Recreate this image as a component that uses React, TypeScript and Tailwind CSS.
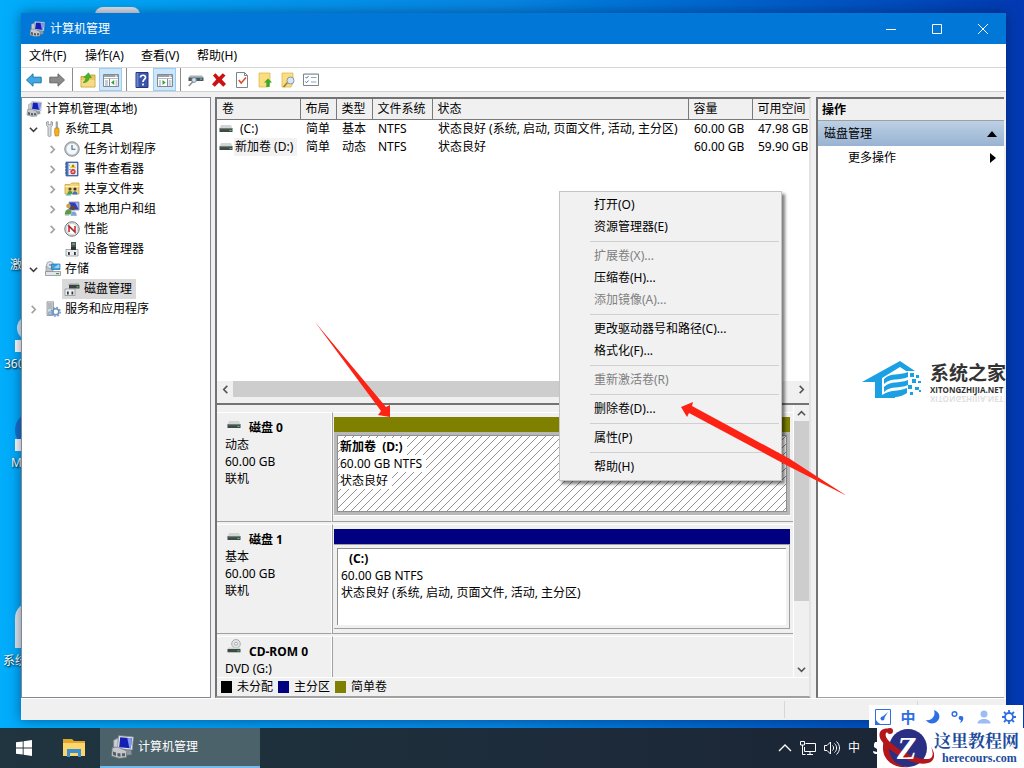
import { useState, ReactNode } from "react";

type IconProps = { className?: string };

const ComputerIcon = ({ className = "h-4 w-4" }: IconProps) => (
  <svg viewBox="0 0 16 16" className={className} aria-hidden="true">
    <path d="M2.500 3.500 5.500 2v9h-3z" fill="#c9ced3" stroke="#8d949b" strokeWidth=".5" />
    <path d="M5.800.5 15.600 1.300 14.800 10 5 9z" fill="#e4e7ea" stroke="#8e959b" strokeWidth=".5" />
    <path d="M6.800 1.500 14.600 2.100 13.900 8.900 6.100 8.100z" fill="#1420b4" />
    <path d="m11.500 1.900 3.100.2-.7 6.800-1-.1z" fill="#7f98ee" />
    <path d="M1.500 8.500 5 8l6 2.500v4.500l-5 .5-5-1.500z" fill="#c3c8cc" stroke="#6f767d" strokeWidth=".5" />
    <path d="m2 11 2 .6v2.400l-2-.6zM5 12l2 .3v2.200l-2-.3zM8 12.200h2v2H8z" fill="#565d64" />
    <path d="m10.500 10 3.500.3.500 2.700-3 .5z" fill="#8d949b" />
  </svg>
);

const ToolsIcon = () => (
  <svg viewBox="0 0 16 16" className="h-4 w-4" aria-hidden="true">
    <path d="M1.500 1v3.500L3 6v8.500c0 1.300 3 1.300 3 0V6l1.500-1.500V1L6 0.500v3.200H3.300V.5z" fill="#d8dcdf" stroke="#7d858c" strokeWidth=".7" />
    <path d="M11 .8h1.600V7H11z" fill="#a8aeb3" stroke="#777" strokeWidth=".4" />
    <path d="M10 7h3.600l.6 3-.7 5h-3.400l-.7-5z" fill="#f2b01e" stroke="#b57a0c" strokeWidth=".6" />
  </svg>
);

const ClockIcon = () => (
  <svg viewBox="0 0 16 16" className="h-4 w-4" aria-hidden="true">
    <circle cx="8" cy="8" r="7.300" fill="#b9bfc5" stroke="#7f868d" strokeWidth=".8" />
    <circle cx="8" cy="8" r="5.600" fill="#f4f8fb" />
    <path d="M8 4v4.300h3.400" fill="none" stroke="#3d5f8a" strokeWidth="1.100" />
  </svg>
);

const EventIcon = () => (
  <svg viewBox="0 0 16 16" className="h-4 w-4" aria-hidden="true">
    <path d="M2 1h12v14H2z" fill="#4f76b8" stroke="#35548c" strokeWidth=".7" />
    <path d="M4.500 2h8.500v12H4.500z" fill="#e9eef6" />
    <path d="M1 3h2M1 6h2M1 9h2M1 12h2" stroke="#35548c" />
    <path d="M9 2.500 12 7H6z" fill="#f5c518" />
    <path d="M9 4v2" stroke="#333" strokeWidth=".9" />
    <circle cx="9" cy="10.700" r="2.600" fill="#d3382c" />
    <path d="m8 9.700 2 2m0-2-2 2" stroke="#fff" strokeWidth=".8" />
    <path d="M5 8.500h2M5 4.500h1" stroke="#7a8ba6" strokeWidth=".7" />
  </svg>
);

const SharedFolderIcon = () => (
  <svg viewBox="0 0 16 16" className="h-4 w-4" aria-hidden="true">
    <path d="M1 3.500h5L7.500 2H15v11H1z" fill="#f3d576" stroke="#c59b2e" strokeWidth=".7" />
    <path d="M1 5.500h14" stroke="#fff2b8" />
    <circle cx="6" cy="8" r="1.600" fill="#5b4630" />
    <path d="M3.500 13c0-4.500 5-4.500 5 0z" fill="#4a9a4a" />
    <circle cx="11" cy="8" r="1.600" fill="#3a3430" />
    <path d="M8.500 13.500c0-4.500 5-4.500 5 0z" fill="#3f73bd" />
    <path d="M1.500 14.500c2-2.500 4-2.500 6 0z" fill="#41b1a4" />
  </svg>
);

const UsersIcon = () => (
  <svg viewBox="0 0 16 16" className="h-4 w-4" aria-hidden="true">
    <path d="M5 1h10v8H5z" fill="#2b3fc0" stroke="#9aa1a8" />
    <path d="M11 1.600h3.500v6.500z" fill="#9db1f4" />
    <circle cx="4.500" cy="5" r="2.300" fill="#d1a24d" />
    <circle cx="9" cy="7" r="2.200" fill="#6b4630" />
    <path d="M.7 13.500C.8 6.500 8.300 6.500 8.300 13.500z" fill="#5c9c49" />
    <path d="M6.500 15C6.500 8.500 13 8.500 13 15z" fill="#7da3dd" stroke="#fff" strokeWidth=".4" />
    <path d="M1 14h4" stroke="#9aa1a8" />
  </svg>
);

const PerformanceIcon = () => (
  <svg viewBox="0 0 16 16" className="h-4 w-4" aria-hidden="true">
    <circle cx="8" cy="8" r="7.200" fill="#e6e8ea" stroke="#6f757b" />
    <circle cx="8" cy="8" r="5.500" fill="#fff" stroke="#b9bdc2" strokeWidth=".6" />
    <path d="M5 11V5l6 6V5" fill="none" stroke="#cb1f24" strokeWidth="1.500" />
    <path d="m4 4.500 7 7" stroke="#444" strokeWidth=".7" />
  </svg>
);

const DeviceIcon = () => (
  <svg viewBox="0 0 16 16" className="h-4 w-4" aria-hidden="true">
    <path d="M7 1h5v8H7z" fill="#4d5358" />
    <path d="M8.300 2.300h2.400v1.500H8.300z" fill="#63cf5c" />
    <path d="M2 8.500h12v6.500H2z" fill="#eceeef" stroke="#82888d" strokeWidth=".7" />
    <path d="M4 11h1.800v3H4zM10 11h1.800v3H10z" fill="#33383c" />
    <path d="M7 6h5v3H7z" fill="#2f3438" />
  </svg>
);

const StorageIcon = () => (
  <svg viewBox="0 0 16 16" className="h-4 w-4" aria-hidden="true">
    <path d="M1 5h7v8H1z" fill="#bfc5ca" stroke="#7c838a" strokeWidth=".6" />
    <circle cx="5" cy="4" r="3.500" fill="#dfe4e8" stroke="#8a9199" strokeWidth=".7" />
    <circle cx="5" cy="4" r="1" fill="#8a9199" />
    <path d="M6.500 3H15v5.500H6.500z" fill="#3aa2e3" stroke="#2a6da1" strokeWidth=".7" />
    <path d="m9 7 4-3.500h1.500V7z" fill="#98d3f7" />
    <path d="M.5 10.500h15v4H.5z" fill="#e2e5e8" stroke="#7c838a" strokeWidth=".7" />
    <path d="M11 12h3v1.200h-3z" fill="#37a33d" />
  </svg>
);

const DiskManagementIcon = () => (
  <svg viewBox="0 0 16 16" className="h-4 w-4" aria-hidden="true">
    <path d="M5 4h10.500v3.500H5z" fill="#3b4044" />
    <path d="M4 3.500 6 2.500h8.500l1 1.500H5z" fill="#9ea4a9" />
    <path d="M12.500 5.200h2v1.200h-2z" fill="#4ed04b" />
    <path d="M1 8h10v6.500H1z" fill="#eceeef" stroke="#82888d" strokeWidth=".7" />
    <path d="M3 10.500h1.700v3H3zM7.500 10.500h1.700v3H7.500z" fill="#33383c" />
  </svg>
);

const ServicesIcon = () => (
  <svg viewBox="0 0 16 16" className="h-4 w-4" aria-hidden="true">
    <path d="M2 .8h6.500v13.700H2z" fill="#d3d8dc" stroke="#818990" strokeWidth=".7" />
    <path d="M3 3h4.500M3 5h4.500M3 7h4.500" stroke="#7f8890" strokeWidth=".8" />
    <circle cx="10.800" cy="10.800" r="3" fill="none" stroke="#6c93bd" strokeWidth="1.600" />
    <circle cx="10.800" cy="10.800" r="4.400" fill="none" stroke="#6c93bd" strokeWidth="1.400" strokeDasharray="1.700 1.750" />
    <circle cx="5" cy="12.500" r="1.700" fill="#a9c6e4" stroke="#6c93bd" strokeWidth=".7" />
  </svg>
);

const DriveIcon = () => (
  <svg viewBox="0 0 14 8" className="h-2 w-[14px] shrink-0" aria-hidden="true">
    <path d="M2 0h10l1.500 3.500H.5z" fill="#cfd6d4" />
    <path d="M.5 3.300h13V7H.5z" fill="#3f4a46" />
    <path d="M.5 3.300h13v.9H.5z" fill="#77817d" />
    <path d="M10.500 5h2v1h-2z" fill="#4bd46b" />
  </svg>
);

const CdIcon = () => (
  <svg viewBox="0 0 14 14" className="h-[14px] w-[14px]" aria-hidden="true">
    <circle cx="9" cy="4.800" r="4.300" fill="#e1e3e5" stroke="#989da1" strokeWidth=".8" />
    <circle cx="9" cy="4.800" r="1.500" fill="#f5f5f5" stroke="#989da1" strokeWidth=".8" />
    <path d="M1.500 8.500h11l1 1.800H.5z" fill="#cfd6d4" />
    <path d="M.5 10h13v3.300H.5z" fill="#3f4a46" />
    <path d="M10.500 11.300h2v1h-2z" fill="#4bd46b" />
  </svg>
);

const ArrowIcon = ({ fill, stroke, flip }: { fill: string; stroke: string; flip?: boolean }) => (
  <svg viewBox="0 0 16 16" className="h-4 w-4" aria-hidden="true">
    <path
      d={flip ? "M15.500 8 9 1.800v3.400H.8v5.600H9v3.400z" : "M.5 8 7 1.800v3.400h8.200v5.600H7v3.400z"}
      fill={fill}
      stroke={stroke}
    />
  </svg>
);

const FolderUpIcon = () => (
  <svg viewBox="0 0 16 16" className="h-4 w-4" aria-hidden="true">
    <path d="M1 4.500h8l1.500-1.500H15v12H1z" fill="#ecc95f" stroke="#c1952b" strokeWidth=".8" />
    <path d="M1.500 14.500V8h13v6.500z" fill="#f7dc85" />
    <path d="M3 10.500C4.500 9.500 6 7.500 6 5.200L3.800 5.500 8.500.8l3 5-2.300-.4C9 8.500 6.500 11 3 10.500z" fill="#45b52c" stroke="#2d8a1b" strokeWidth=".5" />
  </svg>
);

const PanelIcon = ({ flip }: { flip?: boolean }) => (
  <svg viewBox="0 0 16 16" className="h-4 w-4" aria-hidden="true">
    <path d="M.5 2.500h15v12H.5z" fill="#fff" stroke="#82898f" />
    <path d="M1 3h14v2H1z" fill="#9aa2a9" />
    <path d="M12 3.500h2v1h-2z" fill="#fff" />
    <path d="M1 6.500h14" stroke="#b3b9be" />
    {flip ? (
      <>
        <path d="M10.500 7v7.500" stroke="#82898f" />
        <path d="M11.500 9h3M11.500 11h3M11.500 13h3M2 9h2M2 11h2M2 13h2" stroke="#8fa0b3" />
        <path d="m5.500 8 3.200 2.500L5.500 13z" fill="#3d9b35" />
      </>
    ) : (
      <>
        <path d="M6.500 7v7.500" stroke="#82898f" />
        <path d="M2 9h3M2 11h3M2 13h3M12.500 9h2M12.500 11h2M12.500 13h2" stroke="#8fa0b3" />
        <path d="m11.200 8-3.200 2.500 3.200 2.500z" fill="#3d9b35" />
      </>
    )}
  </svg>
);

const HelpIcon = () => (
  <svg viewBox="0 0 16 16" className="h-4 w-4" aria-hidden="true">
    <path d="M2 .5h12v15H2z" fill="#3c55a8" stroke="#25397e" />
    <path d="M2.500 1h2v14h-2z" fill="#6d84cd" />
    <path d="M6.500 5.500c0-3 5-3 5 0 0 2-2.500 2-2.500 4.500M9 11.500v2" fill="none" stroke="#fff" strokeWidth="1.700" />
  </svg>
);

const RefreshDriveIcon = () => (
  <svg viewBox="0 0 16 16" className="h-4 w-4" aria-hidden="true">
    <path d="M2 3.500h12l1.500 2H.5z" fill="#a8b1b6" />
    <path d="M.5 5.500h15V9H.5z" fill="#4d575d" />
    <path d="M12 6.500h2v1.200h-2z" fill="#45c7d8" />
    <path d="M.8 14 5 9.500" stroke="#8d949a" strokeWidth="1.800" />
    <circle cx="6" cy="8" r="2.400" fill="#c5e3f4" stroke="#6c7880" strokeWidth=".8" />
  </svg>
);

const DeleteIcon = () => (
  <svg viewBox="0 0 16 16" className="h-4 w-4" aria-hidden="true">
    <path d="M2 3.500 4.500 1.200 8 5l3.800-3.800L14.500 3.500 10.800 7.600 15 12l-2.800 2.800L8 10.500l-4.200 4.300L1 12.200l4.300-4.600z" fill="#cb1111" />
  </svg>
);

const CheckPageIcon = () => (
  <svg viewBox="0 0 16 16" className="h-4 w-4" aria-hidden="true">
    <path d="M2.500.5h8l3 3v12h-11z" fill="#fff" stroke="#7d848a" />
    <path d="M10.500.5v3h3" fill="none" stroke="#7d848a" />
    <path d="m4.800 8 2.400 3 4.800-5.500" fill="none" stroke="#dc4a2b" strokeWidth="1.500" />
  </svg>
);

const PageUpIcon = () => (
  <svg viewBox="0 0 16 16" className="h-4 w-4" aria-hidden="true">
    <path d="M2 1h11v10l-2 4H2z" fill="#fade7f" stroke="#dcb341" strokeWidth=".7" />
    <path d="m11 6.500 4 4h-2.300V15H9.300v-4.500H7z" fill="#3da72a" />
  </svg>
);

const PageSearchIcon = () => (
  <svg viewBox="0 0 16 16" className="h-4 w-4" aria-hidden="true">
    <path d="M2 1h11v10l-2 4H2z" fill="#fade7f" stroke="#dcb341" strokeWidth=".7" />
    <path d="m3.500 15 4-4.500" stroke="#9a7c40" strokeWidth="1.600" />
    <circle cx="10.500" cy="8.500" r="3.500" fill="#d4e8f5" stroke="#8798a6" />
  </svg>
);

const ChecklistIcon = () => (
  <svg viewBox="0 0 16 16" className="h-4 w-4" aria-hidden="true">
    <path d="M.5 2h15v11.500H.5z" fill="#fff" stroke="#7d848a" />
    <path d="m2.500 5 1 1.200L5.500 4M2.500 9.500l1 1.200 2-2.200" fill="none" stroke="#3b6fc0" />
    <path d="M8 5.500h5.500M8 10h5.500" stroke="#93a5b8" />
    <path d="M1 2.500h14" stroke="#a6adb3" />
  </svg>
);

const Chevron = ({ d, color = "#555" }: { d: string; color?: string }) => (
  <svg viewBox="0 0 10 10" className="h-[9px] w-[9px]" aria-hidden="true">
    <path d={d} fill="none" stroke={color} strokeWidth="1.800" />
  </svg>
);

const DOWN = "M1 3l4 4 4-4";
const UP = "M1 7l4-4 4 4";
const LEFT = "M7 1 3 5l4 4";
const RIGHT = "M3 1l4 4-4 4";

type Node = { label: string; icon: ReactNode; open?: boolean; leaf?: boolean; children?: Node[] };

const tree: Node[] = [
  {
    label: "系统工具",
    icon: <ToolsIcon />,
    open: true,
    children: [
      { label: "任务计划程序", icon: <ClockIcon /> },
      { label: "事件查看器", icon: <EventIcon /> },
      { label: "共享文件夹", icon: <SharedFolderIcon /> },
      { label: "本地用户和组", icon: <UsersIcon /> },
      { label: "性能", icon: <PerformanceIcon /> },
      { label: "设备管理器", icon: <DeviceIcon />, leaf: true },
    ],
  },
  {
    label: "存储",
    icon: <StorageIcon />,
    open: true,
    children: [{ label: "磁盘管理", icon: <DiskManagementIcon />, leaf: true }],
  },
  { label: "服务和应用程序", icon: <ServicesIcon /> },
];

const volumes = [
  { name: "(C:)", layout: "简单", type: "基本", fs: "NTFS", status: "状态良好 (系统, 启动, 页面文件, 活动, 主分区)", size: "60.00 GB", free: "47.98 GB" },
  { name: "新加卷 (D:)", layout: "简单", type: "动态", fs: "NTFS", status: "状态良好", size: "60.00 GB", free: "59.90 GB" },
];

const menuGroups = [
  [{ label: "打开(O)" }, { label: "资源管理器(E)" }],
  [{ label: "扩展卷(X)...", disabled: true }, { label: "压缩卷(H)..." }, { label: "添加镜像(A)...", disabled: true }],
  [{ label: "更改驱动器号和路径(C)..." }, { label: "格式化(F)..." }],
  [{ label: "重新激活卷(R)", disabled: true }],
  [{ label: "删除卷(D)..." }],
  [{ label: "属性(P)" }],
  [{ label: "帮助(H)" }],
];

const toolbar = [
  [
    { name: "后退", icon: <ArrowIcon fill="#3fa9e0" stroke="#2375ab" /> },
    { name: "前进", icon: <ArrowIcon fill="#8b8b8b" stroke="#666" flip /> },
  ],
  [
    { name: "向上", icon: <FolderUpIcon /> },
    { name: "显示控制台树", icon: <PanelIcon />, active: true },
  ],
  [
    { name: "帮助", icon: <HelpIcon /> },
    { name: "显示操作窗格", icon: <PanelIcon flip />, active: true },
  ],
  [
    { name: "刷新", icon: <RefreshDriveIcon /> },
    { name: "删除", icon: <DeleteIcon /> },
    { name: "属性", icon: <CheckPageIcon /> },
    { name: "上移", icon: <PageUpIcon /> },
    { name: "查找", icon: <PageSearchIcon /> },
    { name: "列表", icon: <ChecklistIcon /> },
  ],
];

const TreeItem = ({ node, selected, onSelect }: { node: Node; selected: string; onSelect: (label: string) => void }) => {
  const [open, setOpen] = useState(!!node.open);

  return (
    <li>
      <div className="flex h-5 items-center">
        {node.leaf ? (
          <span className="w-[19px]" />
        ) : (
          <button type="button" aria-label={node.label} onClick={() => setOpen(!open)} className="flex w-[19px] justify-center">
            {open ? <Chevron d={DOWN} color="#404040" /> : <Chevron d={RIGHT} color="#a0a0a0" />}
          </button>
        )}
        <button
          type="button"
          onClick={() => onSelect(node.label)}
          className={selected === node.label ? "flex h-5 items-center bg-[#d9d9d9] pr-1" : "flex h-5 items-center pr-1"}
        >
          <span className="mr-[3px] flex w-[19px] justify-center">{node.icon}</span>
          {node.label}
        </button>
      </div>
      {open && node.children && (
        <ul className="pl-[19px]">
          {node.children.map((child) => (
            <TreeItem key={child.label} node={child} selected={selected} onSelect={onSelect} />
          ))}
        </ul>
      )}
    </li>
  );
};

const DiskRow = ({ icon, title, lines, children }: { icon: ReactNode; title: string; lines: string[]; children?: ReactNode }) => (
  <div className="flex h-[112px] shrink-0">
    <div className="h-[110px] w-[115px] shrink-0 border-t border-r border-b border-t-white border-r-white border-b-[#a0a0a0] pt-[6px] pl-2 leading-[17px]">
      <div className="flex font-bold">
        <span className="-mt-1 mr-2 ml-[2px] flex h-[14px] w-[14px] flex-col justify-end">{icon}</span>
        {title}
      </div>
      {lines.map((line) => (
        <div key={line}>{line}</div>
      ))}
    </div>
    <div className="h-[110px] min-w-0 flex-1 border-t border-b border-l border-t-white border-b-[#a0a0a0] border-l-[#a0a0a0] pt-1 pr-[3px] pl-px">
      {children}
    </div>
  </div>
);

const Hatch = () => (
  <svg className="absolute inset-0 h-full w-full" aria-hidden="true">
    <defs>
      <pattern id="hatch" width="8" height="8" patternUnits="userSpaceOnUse">
        <path d="M-1 9 9-1M-1 1l2-2M7 9l2-2" stroke="#777" strokeWidth=".8" />
      </pattern>
    </defs>
    <rect width="100%" height="100%" fill="url(#hatch)" />
  </svg>
);

const ContextMenu = () => (
  <div role="menu" className="absolute top-[92px] left-[342px] z-10 w-[223px] border border-[#c4c4c4] bg-[#f1f1f1] py-[2px] shadow-[3px_3px_3px_rgba(0,0,0,0.5)]">
    {menuGroups.map((group, i) => (
      <div key={i}>
        {i > 0 && <div className="mr-[2px] ml-[30px] flex h-[7px] items-center"><div className="h-px w-full bg-[#d0d0d0]" /></div>}
        {group.map((item) => (
          <button
            key={item.label}
            type="button"
            role="menuitem"
            disabled={item.disabled}
            className="block h-[22px] w-full pl-[34px] text-left leading-[22px] text-black enabled:hover:bg-[#91c9f7] disabled:text-[#808080]"
          >
            {item.label}
          </button>
        ))}
      </div>
    ))}
  </div>
);

const Watermark = () => (
  <div className="absolute top-[261px] left-[44px] flex w-[160px] gap-2">
    <svg viewBox="0 0 60 42" className="h-[42px] w-[60px] shrink-0" aria-hidden="true">
      <path d="M0 22 38 1l15 10h-9l-6-4-18 11v17h13v3H13V22z" fill="#1aa0e3" />
      <path d="M22 19c8-7 14-3 24-7v5c-9 4-16 0-24 7zM22 27c8-7 14-3 24-7v5c-9 4-16 0-24 7zM20 35c9-6 15-3 25-7v5c-7 5-13 4-25 5z" fill="#1aa0e3" />
      <path d="M48 13h4v4h-4zM54 15h3v3h-3zM50 19h4v4h-4zM56 21h3v2h-3zM46 25h4v4h-4zM53 27h4v3h-4zM48 32h3v3h-3zM57 30h2v2h-2z" fill="#1aa0e3" />
    </svg>
    <div className="pt-[1px] whitespace-nowrap text-[#333]">
      <div className="text-[19px] leading-6 font-bold">系统之家</div>
      <div className="font-['Open_Sans',sans-serif] text-[8px] leading-[10px] font-bold">XITONGZHIJIA.NET</div>
      <div aria-hidden="true" className="-scale-y-100 font-['Open_Sans',sans-serif] text-[8px] leading-[8px] font-bold opacity-15">XITONGZHIJIA.NET</div>
    </div>
  </div>
);

const Window = () => {
  const [selected, setSelected] = useState("磁盘管理");

  return (
    <main className="relative flex min-h-0 flex-1 flex-col bg-[#f0f0f0] shadow-[0_0_12px_rgba(0,20,60,0.5)]">
      <header className="flex h-[31px] shrink-0 items-center bg-[#0178d7] pl-2 text-white">
        <ComputerIcon />
        <h1 className="ml-[5px] flex-1">计算机管理</h1>
        <button type="button" aria-label="最小化" className="flex h-full w-[46px] items-center justify-center">
          <svg viewBox="0 0 10 10" className="h-[10px] w-[10px]"><path d="M0 5.500h10" stroke="#fff" /></svg>
        </button>
        <button type="button" aria-label="最大化" className="flex h-full w-[46px] items-center justify-center">
          <svg viewBox="0 0 10 10" className="h-[10px] w-[10px]"><path d="M.5.5h9v9h-9z" fill="none" stroke="#fff" /></svg>
        </button>
        <button type="button" aria-label="关闭" className="flex h-full w-[46px] items-center justify-center">
          <svg viewBox="0 0 10 10" className="h-[10px] w-[10px]"><path d="m0 0 10 10M10 0 0 10" stroke="#fff" /></svg>
        </button>
      </header>

      <nav className="flex h-6 shrink-0 items-center border-b border-[#d7d7d7] bg-white">
        {["文件(F)", "操作(A)", "查看(V)", "帮助(H)"].map((item) => (
          <button key={item} type="button" className="w-14 px-2 text-left whitespace-nowrap">{item}</button>
        ))}
      </nav>

      <div className="mb-[5px] flex h-6 shrink-0 border-b border-[#d0d0d0] bg-white pl-px">
        {toolbar.map((group, i) => (
          <div key={i} className="flex">
            {i > 0 && <div className="flex w-2 justify-center"><div className="w-px bg-[#8c8c8c]" /></div>}
            {group.map((tool) => (
              <button
                key={tool.name}
                type="button"
                aria-label={tool.name}
                className={
                  "active" in tool
                    ? "flex w-[23px] items-center justify-center border border-[#99cdf5] bg-[#cce6fb]"
                    : "flex w-[23px] items-center justify-center"
                }
              >
                {tool.icon}
              </button>
            ))}
          </div>
        ))}
      </div>

      <div className="flex min-h-0 flex-1 pr-[2px]">
        <aside className="mr-1 w-[190px] shrink-0 border border-[#828790] bg-white pt-px pl-[2px]">
          <div className="flex h-5 items-center">
            <span className="mr-[3px] flex w-[19px] justify-center"><ComputerIcon /></span>
            计算机管理(本地)
          </div>
          <ul>
            {tree.map((node) => (
              <TreeItem key={node.label} node={node} selected={selected} onSelect={setSelected} />
            ))}
          </ul>
        </aside>

        <section className="relative mr-[5px] flex min-w-0 flex-1 flex-col border-2 border-t-[#737373] border-r-[#e3e3e3] border-b-[#a0a0a0] border-l-[#737373]">
          <div className="flex h-[306px] shrink-0 flex-col border-b-2 border-[#737373]">
            <div className="flex-1 overflow-hidden bg-white">
              <table className="w-full table-fixed border-collapse text-left whitespace-nowrap">
                <colgroup>
                  <col className="w-[83px]" />
                  <col className="w-[36px]" />
                  <col className="w-[36px]" />
                  <col className="w-[60px]" />
                  <col />
                  <col className="w-[64px]" />
                  <col className="w-[57px]" />
                </colgroup>
                <thead>
                  <tr className="h-5 bg-[#f0f0f0]">
                    {["卷", "布局", "类型", "文件系统", "状态", "容量", "可用空间"].map((title) => (
                      <th key={title} className="border-r border-b border-[#7a7a7a] p-0 pl-[5px] font-normal last:border-r-0">{title}</th>
                    ))}
                  </tr>
                </thead>
                <tbody>
                  {volumes.map((volume, i) => (
                    <tr key={volume.name} className="h-[18px] leading-[18px]">
                      <td className="p-0">
                        <div className="flex items-center pl-[2px]">
                          <DriveIcon />
                          <span className={i === 1 ? "ml-px bg-[#f2f2f2] pr-1 pl-px" : "pl-[7px]"}>{volume.name}</span>
                        </div>
                      </td>
                      <td className="p-0 pl-[6px]">{volume.layout}</td>
                      <td className="p-0 pl-[6px]">{volume.type}</td>
                      <td className="p-0 pl-[6px]">{volume.fs}</td>
                      <td className="p-0 pl-[6px]">{volume.status}</td>
                      <td className="p-0 pl-[6px]">{volume.size}</td>
                      <td className="p-0 pl-[6px]">{volume.free}</td>
                    </tr>
                  ))}
                </tbody>
              </table>
            </div>
            <div className="mb-[6px] flex h-4 bg-[#f0f0f0]">
              <button type="button" aria-label="向左滚动" className="flex w-4 items-center justify-center"><Chevron d={LEFT} /></button>
              <div className="flex-1"><div className="h-full w-11/12 bg-[#cdcdcd]" /></div>
              <button type="button" aria-label="向右滚动" className="flex w-4 items-center justify-center"><Chevron d={RIGHT} /></button>
            </div>
          </div>

          <div className="flex min-h-0 flex-1 border-b border-white">
            <div className="flex min-w-0 flex-1 flex-col overflow-hidden pt-[7px]">
              <DiskRow icon={<DriveIcon />} title="磁盘 0" lines={["动态", "60.00 GB", "联机"]}>
                <div className="h-[15px] bg-[#808000]" />
                <div className="h-[84px] border-b border-white bg-[#b8b8b8] p-[3px]">
                  <div className="relative h-full border border-[#909090] bg-white pt-[2px] pl-[2px] leading-[17px]">
                    <Hatch />
                    <div className="relative"><span className="inline-block bg-white pr-1 font-bold whitespace-pre">新加卷  (D:)</span></div>
                    <div className="relative"><span className="inline-block bg-white pr-1">60.00 GB NTFS</span></div>
                    <div className="relative"><span className="inline-block bg-white pr-1">状态良好</span></div>
                  </div>
                </div>
              </DiskRow>
              <DiskRow icon={<DriveIcon />} title="磁盘 1" lines={["基本", "60.00 GB", "联机"]}>
                <div className="h-[15px] bg-[#000080]" />
                <div className="h-[85px] border-t border-r border-b border-[#a0a0a0] p-[3px]">
                  <div className="h-full border-t border-l border-[#909090] bg-white pt-px pl-[3px] leading-[17px]">
                    <div className="pl-2 font-bold">(C:)</div>
                    <div>60.00 GB NTFS</div>
                    <div>状态良好 (系统, 启动, 页面文件, 活动, 主分区)</div>
                  </div>
                </div>
              </DiskRow>
              <DiskRow icon={<CdIcon />} title="CD-ROM 0" lines={["DVD (G:)"]} />
            </div>
            <div className="flex w-4 shrink-0 flex-col border-l border-white bg-[#f0f0f0]">
              <button type="button" aria-label="向上滚动" className="flex h-4 items-center justify-center"><Chevron d={UP} /></button>
              <div className="flex-1"><div className="h-3/4 bg-[#cdcdcd]" /></div>
              <button type="button" aria-label="向下滚动" className="flex h-4 items-center justify-center"><Chevron d={DOWN} /></button>
            </div>
          </div>

          <div className="flex h-[18px] shrink-0 items-center gap-[5px] pl-1">
            <span className="h-3 w-[11px] bg-black" />未分配
            <span className="h-3 w-[11px] bg-[#000080]" />主分区
            <span className="h-3 w-[11px] bg-[#808000]" />简单卷
          </div>

          <ContextMenu />

          {/* pointers to the volume bar and to the delete entry */}
          <svg viewBox="0 0 76 96" className="absolute top-[223px] left-[98px] h-[96px] w-[76px]" aria-hidden="true">
            <path d="m0 0 71 85 4-2 0 12-12-2 3-4z" fill="#fc2314" />
          </svg>
          <svg viewBox="0 0 166 94" className="absolute top-[302px] left-[464px] z-20 h-[94px] w-[166px]" aria-hidden="true">
            <path d="m0 6 12-5-1 4 98 53 57 37-57-29L8 12l-2 4z" fill="#fc2314" />
          </svg>
        </section>

        <aside className="relative w-[188px] shrink-0 border-t-2 border-l-2 border-[#737373] border-b border-b-[#a0a0a0] bg-white">
          <h2 className="h-[22px] border-b border-[#a0a0a0] bg-[#f0f0f0] pl-1 leading-[21px] font-bold">操作</h2>
          <button type="button" className="flex h-[25px] w-full items-center justify-between bg-linear-to-b from-[#bdd0e5] to-[#98b3d2] pr-[7px] pl-[6px]">
            磁盘管理
            <svg viewBox="0 0 10 6" className="h-[6px] w-[10px]"><path d="m0 6 5-6 5 6z" /></svg>
          </button>
          <button type="button" className="flex h-6 w-full items-center justify-between pr-2 pl-[30px]">
            更多操作
            <svg viewBox="0 0 6 10" className="h-[10px] w-[6px]"><path d="m0 0 6 5-6 5z" /></svg>
          </button>
          <Watermark />
        </aside>
      </div>

      <footer className="flex h-[22px] shrink-0 border-t border-white py-[2px] pr-[2px]">
        <span className="flex-1 border-r border-[#d7d7d7]" />
        <span className="w-[133px] border-r border-[#d7d7d7]" />
        <span className="w-[86px]" />
      </footer>
    </main>
  );
};

const DesktopShortcuts = () => (
  <div className="absolute top-0 left-0 h-full w-[160px] text-white [text-shadow:1px_1px_2px_#000]">
    <div className="absolute top-[7px] left-[95px] h-6 w-[45px] rounded-t-lg bg-[#e4e6e8]" />
    <span className="absolute top-[257px] left-[10px] leading-4">激</span>
    <div className="absolute top-[316px] left-[17px] h-6 w-6 rounded-full bg-[#d3ecfb]" />
    <div className="absolute top-[340px] left-[15px] h-3 w-3 bg-white" />
    <span className="absolute top-[356px] left-1 leading-4">360</span>
    <div className="absolute top-[412px] left-[15px] h-9 w-9 rounded-full bg-[#1370cd]" />
    <div className="absolute top-[439px] left-[15px] h-3 w-3 bg-white" />
    <span className="absolute top-[455px] left-[11px] leading-4">M</span>
    <div className="absolute top-[602px] left-[15px] h-[46px] w-9 rounded-tl-2xl bg-[#e0e8ee]" />
    <span className="absolute top-[653px] left-[3px] leading-4">系统</span>
  </div>
);

const ImeBar = () => (
  <div className="absolute right-px bottom-10 z-30 flex h-[23px] w-[154px] items-center justify-between bg-white px-[6px] text-[#2f6fe4]">
    <svg viewBox="0 0 16 16" className="h-4 w-4" aria-hidden="true">
      <path d="M.5.5h15v15H.5z" fill="#fff" stroke="currentColor" />
      <path d="M0 9c2 4 4 6 8 7H0zM6 9l7-6-5 8z" fill="currentColor" />
      <circle cx="7.500" cy="9.500" r="2" fill="currentColor" />
    </svg>
    <span className="text-[15px] leading-5 font-bold">中</span>
    <svg viewBox="0 0 16 16" className="h-4 w-4" aria-hidden="true">
      <path d="M9 1c6 2 7 8 3 11.500s-9 2-11-1.500c6 1 10-4 8-10z" fill="currentColor" />
    </svg>
    <svg viewBox="0 0 16 16" className="h-4 w-4" aria-hidden="true">
      <circle cx="4.500" cy="5" r="2.300" fill="none" stroke="currentColor" strokeWidth="1.500" />
      <path d="M9 7.500c4-1.500 5 1 4 3.500-.5 1.500-1.500 2.500-3.500 3 1-1 1.600-2 1.300-3C9 11 8 9 9 7.500z" fill="currentColor" />
    </svg>
    <svg viewBox="0 0 16 16" className="h-4 w-4" aria-hidden="true">
      <circle cx="8" cy="5" r="3.500" fill="#9dbcf3" />
      <path d="M1.500 14.500c0-6 13-6 13 0z" fill="#9dbcf3" />
    </svg>
    <svg viewBox="0 0 16 16" className="h-4 w-4" aria-hidden="true">
      <circle cx="8" cy="8" r="4" fill="none" stroke="currentColor" strokeWidth="1.800" />
      <path d="M8 1v3M8 12v3M1 8h3M12 8h3M3 3l2.200 2.200M10.800 10.800 13 13M13 3l-2.200 2.200M5.200 10.800 3 13" stroke="currentColor" strokeWidth="1.800" />
    </svg>
  </div>
);

const SiteBadge = () => (
  <div className="absolute right-0 bottom-0 z-30 flex h-10 w-[147px] items-center overflow-hidden bg-white">
    <svg viewBox="0 0 57 40" className="h-10 w-[57px] shrink-0" aria-hidden="true">
      <path d="M7 12c-5 18 8 29 25 27-12-1-20-10-19-22z" fill="#b3161b" />
      <circle cx="31" cy="20" r="19" fill="#2a2f83" />
      <path d="M14 1C4-1 0 5 4 12c9 13 34 27 47 23 7-2 8-9 3-16 3 7 2 12-4 12C40 32 20 22 11 12 7 7 8 3 14 4z" fill="#b3161b" />
      <circle cx="13" cy="3" r="3" fill="#b3161b" />
      <text x="20" y="31" fontFamily="Liberation Serif, serif" fontSize="32" fontWeight="bold" fontStyle="italic" fill="#fff">Z</text>
    </svg>
    <div className="whitespace-nowrap text-[#1c4b9c]">
      <div className="font-['Noto_Serif_CJK_SC','Noto_Sans_CJK_SC',serif] text-[17px] leading-5 font-bold">这里教程网</div>
      <div className="pl-2 font-['Liberation_Serif',serif] text-[12px] leading-4 font-bold">herecours.com</div>
    </div>
  </div>
);

const Taskbar = () => (
  <footer className="relative flex h-10 shrink-0 items-center bg-linear-to-r from-[#20353f] to-[#1a2335] text-white">
    <button type="button" aria-label="开始" className="flex h-full w-12 items-center justify-center">
      <svg viewBox="0 0 16 16" className="h-4 w-4"><path d="M0 2.300 6.700 1.400v6.100H0zM7.600 1.300 16 0v7.500H7.600zM0 8.400h6.700v6.200L0 13.700zM7.600 8.400H16V16l-8.400-1.200z" fill="#fff" /></svg>
    </button>
    <button type="button" aria-label="文件资源管理器" className="flex h-full w-[52px] items-center justify-center">
      <svg viewBox="0 0 22 18" className="h-[18px] w-[22px]">
        <path d="M0 0h9l2 2h11v15H0z" fill="#e3a52c" />
        <path d="M0 4h22v13H0z" fill="#fcd66a" />
        <path d="M4 10h14v8h-3v-4H7v4H4z" fill="#3a8fd2" />
        <path d="M7 14h8v3H7z" fill="#fcd66a" />
      </svg>
    </button>
    <button type="button" className="flex h-full w-40 items-center border-b-2 border-[#76b9ed] bg-[#4c626b] pl-[10px]">
      <ComputerIcon className="h-6 w-6" />
      <span className="ml-1">计算机管理</span>
    </button>
    <div className="ml-auto flex items-center gap-2 pr-[136px]">
      <svg viewBox="0 0 14 16" className="h-4 w-[14px]" aria-hidden="true">
        <path d="m1 11 6-6 6 6" fill="none" stroke="#fff" strokeWidth="1.300" />
      </svg>
      <svg viewBox="0 0 16 16" className="h-4 w-4" aria-hidden="true">
        <path d="M5.500 3.500h10v8h-11V7M7 14.500h6M10 12v2.500M.5 1.500h4V5h-4zM2.500 5v9.500h3" fill="none" stroke="#fff" />
      </svg>
      <svg viewBox="0 0 16 16" className="h-4 w-4" aria-hidden="true">
        <path d="M.5 5.500h2.500L6.500 2v12L3 10.500H.5zM8.500 5.500c1.500 1.500 1.500 3.500 0 5M10.500 3.500c2.800 2.500 2.800 6.500 0 9M12.500 1.500c4 4 4 9 0 13" fill="none" stroke="#fff" />
      </svg>
      <span className="mr-1">中</span>
      <svg viewBox="0 0 16 16" className="h-4 w-4" aria-hidden="true">
        <path d="M3 2h11v12H3a3 3 0 0 1-2-3l4 1V9L2 7V4z" fill="#fff" />
      </svg>
    </div>
  </footer>
);

export default function App() {
  return (
    <div className="relative flex h-screen flex-col overflow-hidden bg-linear-to-r from-[#02adfc] via-[#0784e2] to-[#0339b2] font-['Noto_Sans','Noto_Sans_CJK_SC',sans-serif] text-[12px] leading-4 text-black">
      <DesktopShortcuts />
      <div className="flex min-h-0 flex-1 flex-col pt-[13px] pr-[18px] pb-2 pl-[21px]">
        <Window />
      </div>
      <Taskbar />
      <ImeBar />
      <SiteBadge />
    </div>
  );
}
